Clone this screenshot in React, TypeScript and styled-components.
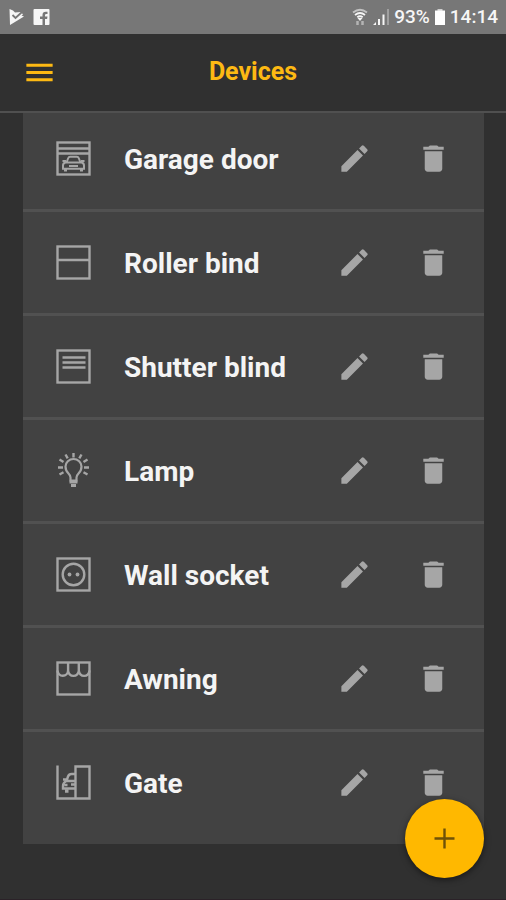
import React from "react";
import styled, { createGlobalStyle } from "styled-components";
import { MdDelete, MdEdit, MdMenu } from "react-icons/md";

const GlobalStyle = createGlobalStyle`
  * { box-sizing: border-box; }
  html, body, #root { height: 100%; margin: 0; }
  body { background: #303030; font-family: Roboto, "Noto Sans", sans-serif; color: #f4f4f4; }
`;

const Screen = styled.div`
  display: flex;
  flex-direction: column;
  height: 100vh;
  border-bottom: 1px solid #2b2228;
`;

const StatusBar = styled.div`
  flex: none;
  display: flex;
  align-items: center;
  justify-content: space-between;
  height: 34px;
  padding: 0 8px 0 9px;
  background: #777777;
`;

const StatusGroup = styled.div<{ $gap: number }>`
  display: flex;
  align-items: center;
  gap: ${(p) => p.$gap}px;
`;

const StatusText = styled.span`
  font-size: 19px;
  line-height: 24px;
  font-weight: 500;
  color: #f6f6f6;
`;

const Header = styled.header`
  flex: none;
  display: grid;
  grid-template-columns: 36px 1fr 36px;
  align-items: center;
  height: 79px;
  padding: 0 22px;
  background: #303030;
  border-bottom: 2px solid #505050;
`;

const Title = styled.h1`
  margin: 0;
  padding-bottom: 2px;
  font-size: 25px;
  line-height: 32px;
  font-weight: 700;
  text-align: center;
  color: #fdb913;
`;

const IconButton = styled.button<{ $accent?: boolean }>`
  display: flex;
  padding: 0;
  border: 0;
  background: none;
  font-size: 35px;
  color: ${(p) => (p.$accent ? "#fdb913" : "#a6a6a6")};
  cursor: pointer;
`;

const Scroller = styled.main`
  flex: 1;
  min-height: 0;
  overflow: hidden;
  padding: 0 22px 0 23px;
`;

const DeviceList = styled.ul`
  list-style: none;
  margin: -5px 0 0;
  padding: 0 0 8px;
  background: #424242;
`;

const DeviceRow = styled.li`
  display: grid;
  grid-template-columns: 35px 1fr auto;
  align-items: center;
  height: 104px;
  padding: 0 33px;
  border-bottom: 3px solid #515151;
  &:last-child { border-color: transparent; }
`;

const DeviceName = styled.span`
  padding: 3px 0 0 33px;
  font-size: 28px;
  line-height: 32px;
  font-weight: 700;
`;

const Actions = styled.div`
  display: flex;
  gap: 44px;
  padding-bottom: 1px;
`;

const AddButton = styled.button`
  position: fixed;
  right: 22px;
  bottom: 22px;
  display: flex;
  align-items: center;
  justify-content: center;
  width: 79px;
  height: 79px;
  padding: 0;
  border: 0;
  border-radius: 50%;
  background: #ffb800;
  box-shadow: 0 2px 6px rgba(0, 0, 0, 0.5);
  cursor: pointer;
`;

const Glyph = styled.svg`
  display: block;
  fill: none;
  stroke: #a6a6a6;
  stroke-width: 2.4;
  margin-bottom: 1px;
`;

const Frame = () => <rect x="2" y="2" width="32" height="32" />;

const GarageIcon = () => (
  <>
    <Frame />
    <path d="M2 8h32M2 13h32" />
    <path d="M11 22l1.800-4.500q.5-1.300 1.800-1.300h6.800q1.300 0 1.800 1.300L25 22M10 22h16q2.500.5 2.500 3v3.200h-21V25q0-2.500 2.500-3z" strokeWidth="2" />
    <path d="M13.500 25.500h9M7 20.500h3.500M25.500 20.500H29M10 28v2.500M26 28v2.500" strokeWidth="2" />
    <path d="M8.500 29.500h3M24.500 29.500h3" strokeWidth="3" />
  </>
);

const RollerIcon = () => (
  <>
    <Frame />
    <path d="M2 15.500h32" />
  </>
);

const ShutterIcon = () => (
  <>
    <Frame />
    <path d="M7 9h23M7 14h23M7 19h23" />
  </>
);

const LampIcon = () => (
  <>
    <path d="M15 28v-3q0-2-2-4-3-3-3-7a8 7.500 0 0 1 16 0q0 4-3 7-2 2-2 4v3z" strokeWidth="2.200" />
    <path d="M14 29.500h8M15.500 33h5" strokeWidth="3" />
    <path d="M18 0v5M10 2l2.200 3.800M26 2l-2.200 3.800M4 7l4 2.500M32 7l-4 2.500M2.500 15H7.500M28.500 15h5M4 22l4-2.300M32 22l-4-2.300" />
  </>
);

const SocketIcon = () => (
  <>
    <Frame />
    <circle cx="18" cy="18" r="10.800" />
    <g fill="#a6a6a6" stroke="none">
      <circle cx="14" cy="18" r="1.900" />
      <circle cx="22" cy="18" r="1.900" />
    </g>
  </>
);

const AwningIcon = () => (
  <>
    <Frame />
    <path d="M2 10a5.300 5.300 0 0 0 10.600 0V2M12.600 10a5.300 5.300 0 0 0 10.700 0V2M23.300 10a5.300 5.300 0 0 0 10.700 0" />
  </>
);

const GateIcon = () => (
  <>
    <path d="M2 1v33h32V2H20v32" />
    <path d="M20 9.500h-4q-2.500 0-3.500 2.500l-1.500 4.500h9M11 16.500q-3.500 1.500-3.500 5V24H20M7.500 15h4M15.500 20H20M9 20.500h3" />
    <path d="M9.500 26.500h3.500" strokeWidth="3.500" />
  </>
);

type Device = { name: string; Icon: () => React.JSX.Element };

const devices: Device[] = [
  { name: "Garage door", Icon: GarageIcon },
  { name: "Roller bind", Icon: RollerIcon },
  { name: "Shutter blind", Icon: ShutterIcon },
  { name: "Lamp", Icon: LampIcon },
  { name: "Wall socket", Icon: SocketIcon },
  { name: "Awning", Icon: AwningIcon },
  { name: "Gate", Icon: GateIcon },
];

const PlayCheckIcon = () => (
  <svg width="16" height="18" viewBox="0 0 16 18" aria-hidden="true">
    <path d="M0.500 1L4 2.500 6 4.500 12 4l2 2.500-1.500 1L15 8.500 1 17z" fill="#f6f6f6" />
    <path d="M3.500 7l3 3L13 4" fill="none" stroke="#777777" strokeWidth="1.800" />
  </svg>
);

const FacebookIcon = () => (
  <svg width="17" height="18" viewBox="0 0 17 18" aria-hidden="true">
    <rect x="0.500" y="1" width="16" height="16" rx="1" fill="#f6f6f6" />
    <path d="M9.500 17v-6H7V8.500h2.500V7q0-3.300 3.300-3.300H14.500v2.300h-1.300q-1.200 0-1.200 1.200v1.300h2.500l-.4 2.500H12v6z" fill="#777777" />
  </svg>
);

const WifiIcon = () => (
  <svg width="16" height="18" viewBox="0 0 16 18" aria-hidden="true">
    <g fill="none" stroke="#f6f6f6" strokeWidth="1.800">
      <path d="M1 4.500q7-5.500 14 0" opacity=".6" />
      <path d="M3 7q5-4 10 0M5.300 9.300q2.700-2.200 5.400 0" />
    </g>
    <path d="M5.500 10h5L8 13z" fill="#f6f6f6" />
    <path d="M5.500 13v4M10.500 13v4" stroke="#b4b4b4" strokeWidth="2.500" fill="none" />
  </svg>
);

const SignalIcon = () => (
  <svg width="18" height="18" viewBox="0 0 18 18" aria-hidden="true">
    <path d="M1 17l3-3v3zM6 11h2v6H6zM10.500 6.500h2V17h-2z" fill="#f6f6f6" />
    <path d="M15 1h2v16h-2z" fill="#a0a0a0" />
  </svg>
);

const BatteryIcon = () => (
  <svg width="12" height="18" viewBox="0 0 12 18" aria-hidden="true">
    <path d="M3.500 1h5v2h-5z" fill="#d0d0d0" />
    <path d="M1 2.500h10V17H1z" fill="#ffffff" />
  </svg>
);

const PlusIcon = () => (
  <svg width="21" height="21" viewBox="0 0 21 21" aria-hidden="true">
    <path d="M10.500 0.500v20M0.500 10.500h20" stroke="#6f5208" strokeWidth="2.400" />
  </svg>
);

export default function App() {
  return (
    <Screen>
      <GlobalStyle />
      <StatusBar>
        <StatusGroup $gap={8}>
          <PlayCheckIcon />
          <FacebookIcon />
        </StatusGroup>
        <StatusGroup $gap={4}>
          <WifiIcon />
          <SignalIcon />
          <StatusText>93%</StatusText>
          <BatteryIcon />
          <StatusText>14:14</StatusText>
        </StatusGroup>
      </StatusBar>
      <Header>
        <IconButton $accent aria-label="Menu">
          <MdMenu />
        </IconButton>
        <Title>Devices</Title>
      </Header>
      <Scroller>
        <DeviceList>
          {devices.map(({ name, Icon }) => (
            <DeviceRow key={name}>
              <Glyph width="35" height="35" viewBox="0.5 0.5 35 35" aria-hidden="true">
                <Icon />
              </Glyph>
              <DeviceName>{name}</DeviceName>
              <Actions>
                <IconButton aria-label={`Edit ${name}`}>
                  <MdEdit />
                </IconButton>
                <IconButton aria-label={`Delete ${name}`}>
                  <MdDelete />
                </IconButton>
              </Actions>
            </DeviceRow>
          ))}
        </DeviceList>
      </Scroller>
      <AddButton aria-label="Add device">
        <PlusIcon />
      </AddButton>
    </Screen>
  );
}
